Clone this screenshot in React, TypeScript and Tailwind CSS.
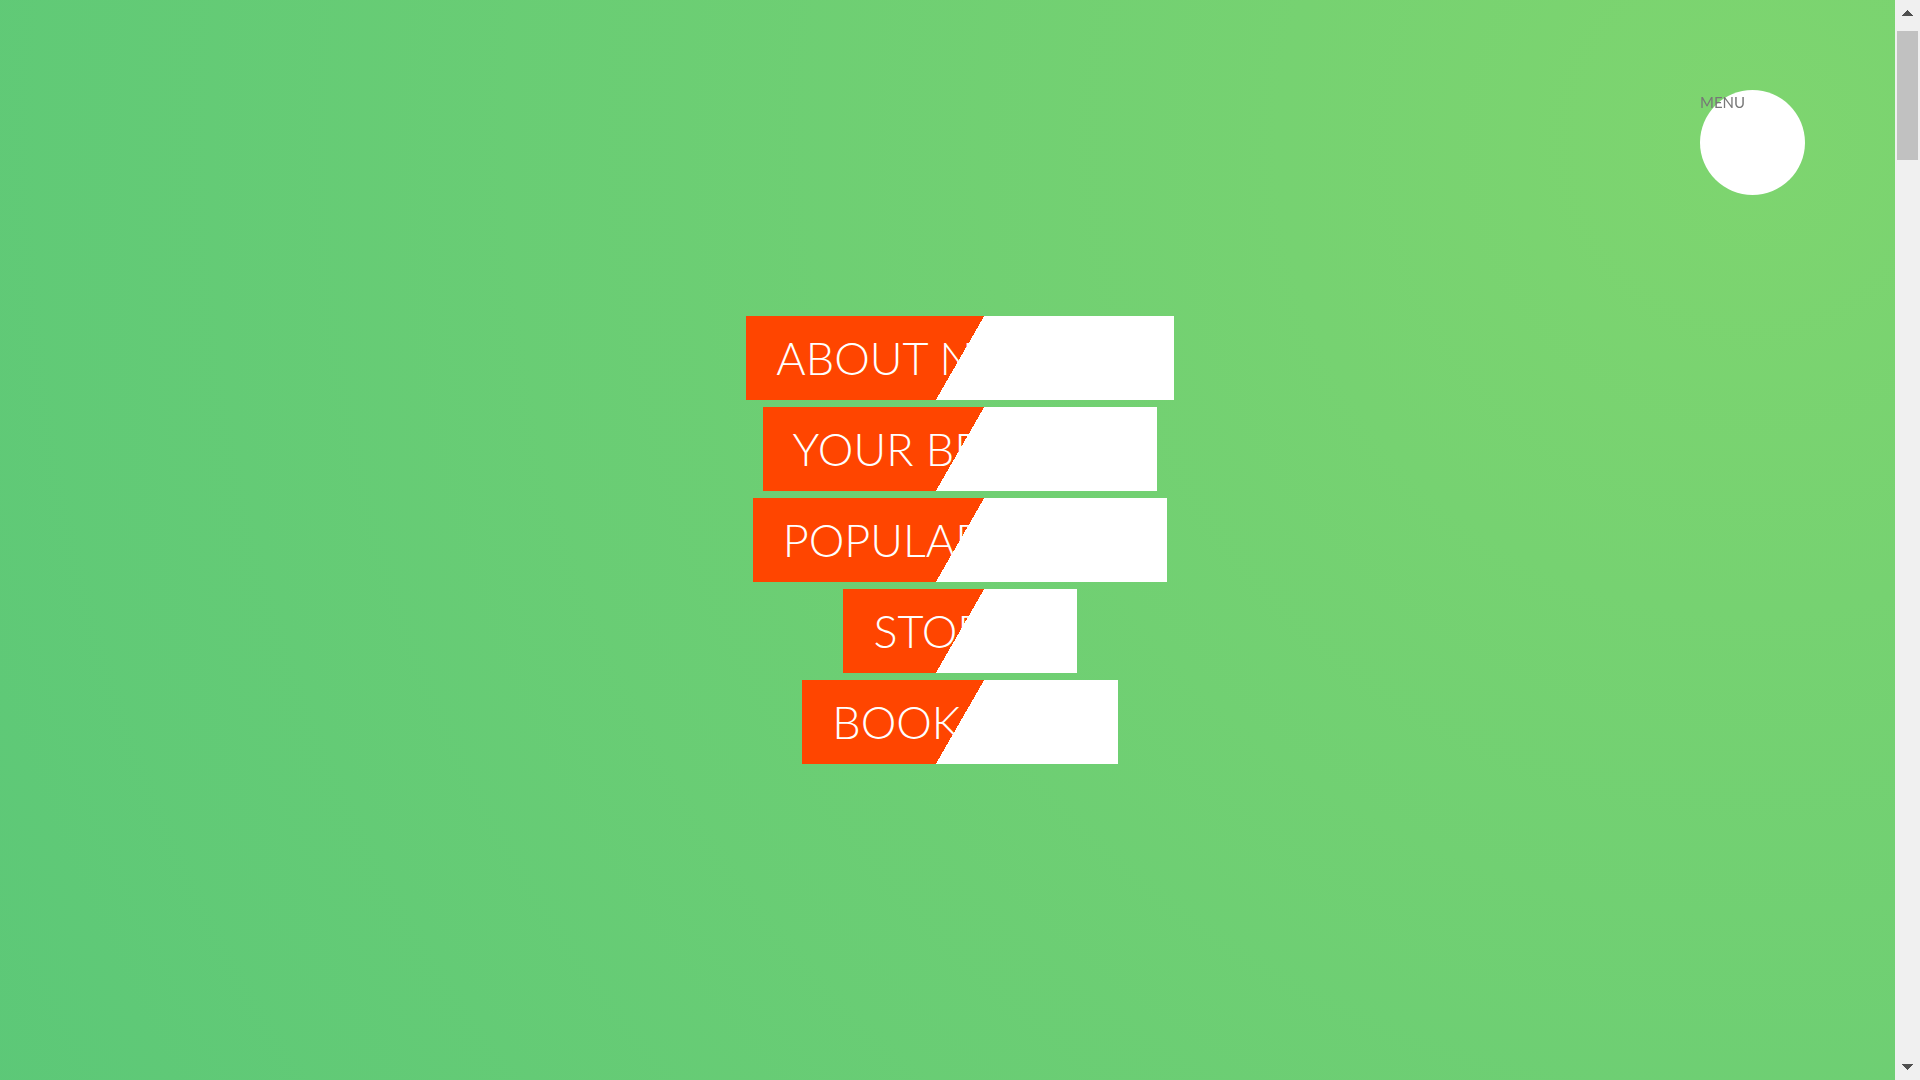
const links = ["About natours", "Your benefits", "Popular tours", "Stories", "Book now"];

function Scrollbar() {
  return (
    <div aria-hidden="true" className="fixed inset-y-0 right-0 flex w-[25px] flex-col items-center bg-[#f0f0f0]">
      <svg className="mt-2.5 h-1.5 w-[11px] shrink-0" viewBox="0 0 11 6" fill="#505050" shapeRendering="crispEdges">
        <path d="M5 0h1v1h1v1h1v1h1v1h1v1h1v1H0V5h1V4h1V3h1V2h1V1h1z" />
      </svg>
      <div className="mt-[15px] h-[129px] w-[21px] bg-[#c1c1c1]" />
      <svg className="mt-auto mb-2.5 h-1.5 w-[11px] shrink-0" viewBox="0 0 11 6" fill="#505050" shapeRendering="crispEdges">
        <path d="M0 0h11v1h-1v1H9v1H8v1H7v1H6v1H5V5H4V4H3V3H2V2H1V1H0z" />
      </svg>
    </div>
  );
}

export default function App() {
  return (
    <div className="flex min-h-screen items-center justify-center bg-[radial-gradient(circle_5091px_at_calc(100%_-_168px)_142px,#7ed56f,#28b485)] font-['Lato',sans-serif]">
      <nav aria-label="Main">
        <ul className="flex flex-col items-center gap-[7px]">
          {links.map((label) => (
            <li key={label}>
              <a
                href="#"
                className="block bg-[linear-gradient(120deg,#ff4500_50%,#ffffff_50%)] px-[30px] py-[15px] text-[45px] leading-[54px] font-light text-white uppercase"
              >
                {label}
              </a>
            </li>
          ))}
        </ul>
      </nav>
      <button
        type="button"
        className="fixed top-[90px] right-[115px] flex size-[105px] items-start rounded-full bg-white text-[15px] leading-[25px] text-[#777777]"
      >
        MENU
      </button>
      <Scrollbar />
    </div>
  );
}
